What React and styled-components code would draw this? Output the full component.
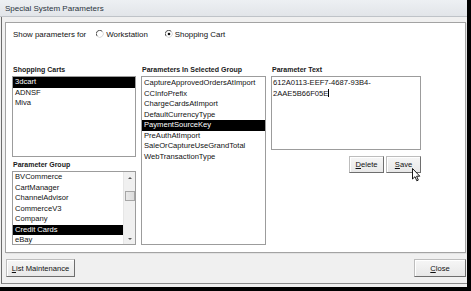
import React from 'react'
import styled, { createGlobalStyle } from 'styled-components'

const GlobalStyle = createGlobalStyle`
  html, body { margin: 0; padding: 0; background: #000; }
  body { font-family: "Liberation Sans", Arial, sans-serif; }
`

const shoppingCarts = ['3dcart', 'ADNSF', 'Miva']
const groups = ['BVCommerce', 'CartManager', 'ChannelAdvisor', 'CommerceV3', 'Company', 'Credit Cards', 'eBay']
const params = [
  'CaptureApprovedOrdersAtImport',
  'CCInfoPrefix',
  'ChargeCardsAtImport',
  'DefaultCurrencyType',
  'PaymentSourceKey',
  'PreAuthAtImport',
  'SaleOrCaptureUseGrandTotal',
  'WebTransactionType',
]

const Radio = ({ checked }) => (
  <svg width="8" height="8" viewBox="0 0 8 8">
    <path d="M1.2 6.2 A3.3 3.3 0 0 1 6.4 1.4" fill="none" stroke="#4a4a4a" strokeWidth="1" />
    <path d="M6.4 1.4 A3.3 3.3 0 0 1 1.2 6.2" fill="none" stroke="#d8d8d8" strokeWidth="1" />
    {checked && <circle cx="4" cy="4" r="1.3" fill="#111" />}
  </svg>
)

const Pointer = () => (
  <svg width="9" height="14" viewBox="0 0 9 14">
    <path d="M0.5 0.5 L0.5 11 L3 8.7 L4.8 12.8 L6.3 12.1 L4.6 8.2 L7.8 8.2 Z" fill="#fff" stroke="#000" strokeWidth="0.9" strokeLinejoin="round" />
  </svg>
)

const App = () => {
  return (
    <>
      <GlobalStyle />
      <Window>
        <TitleBar>Special System Parameters</TitleBar>
        <Body>
          <Panel>
            <ShowRow>
              <span>Show parameters for</span>
              <RadioOption $gap={10}>
                <Radio />
                <span>Workstation</span>
              </RadioOption>
              <RadioOption $gap={17}>
                <Radio checked />
                <span>Shopping Cart</span>
              </RadioOption>
            </ShowRow>
            <Columns>
              <Column $width={124}>
                <Label>Shopping Carts</Label>
                <ListBox $height={81}>
                  {shoppingCarts.map((c) => (
                    <Row key={c} $selected={c === '3dcart'}>{c}</Row>
                  ))}
                </ListBox>
                <Label $top={3}>Parameter Group</Label>
                <ListBox $height={74} $scroll>
                  <ListRows>
                    {groups.map((g) => (
                      <Row key={g} $selected={g === 'Credit Cards'}>{g}</Row>
                    ))}
                  </ListRows>
                  <ScrollBar>
                    <Arrow $up />
                    <Thumb />
                    <Spacer />
                    <Arrow />
                  </ScrollBar>
                </ListBox>
              </Column>
              <Column $width={125}>
                <Label>Parameters In Selected Group</Label>
                <ListBox $height={169} $padTop={1}>
                  {params.map((p) => (
                    <Row key={p} $selected={p === 'PaymentSourceKey'}>{p}</Row>
                  ))}
                </ListBox>
              </Column>
              <Column $width={150}>
                <Label>Parameter Text</Label>
                <TextBox>
                  612A0113-EEF7-4687-93B4-<br />2AAE5B66F05E<Caret />
                </TextBox>
                <ButtonRow>
                  <Button $width={35}><u>D</u>elete</Button>
                  <Button $width={35}>
                    <u>S</u>ave
                    <Cursor><Pointer /></Cursor>
                  </Button>
                </ButtonRow>
              </Column>
            </Columns>
          </Panel>
          <Footer>
            <Button $width={69} $height={18}><u>L</u>ist Maintenance</Button>
            <Button $width={52} $height={18}><u>C</u>lose</Button>
          </Footer>
        </Body>
      </Window>
    </>
  )
}

const Window = styled.div`
  width: 471px;
  height: 291px;
  box-sizing: border-box;
  background: #f0f0f0;
  border-right: 4px solid #000;
  border-bottom: 4px solid #000;
  display: flex;
  flex-direction: column;
  overflow: hidden;
  color: #111;
`

const TitleBar = styled.div`
  height: 16px;
  flex-shrink: 0;
  background: linear-gradient(#edf0f3, #e2e5e9);
  border-bottom: 1px solid #bfc3c8;
  font-size: 8px;
  line-height: 17px;
  padding-left: 5px;
  color: #2a3440;
`

const Body = styled.div`
  flex: 1;
  display: flex;
  flex-direction: column;
  padding: 5px 1px 0 3px;
  margin: 0 0 3px 1px;
  border-left: 1px solid #6c6c6c;
  border-bottom: 1px solid #8a8a8a;
`

const Panel = styled.div`
  height: 231px;
  box-sizing: border-box;
  background: #fff;
  border: 1px solid #a3a3a3;
  box-shadow: 1px 1px 0 #e2e2e2;
  padding: 6px 6px 0 6px;
`

const ShowRow = styled.div`
  display: flex;
  align-items: center;
  height: 10px;
  padding-left: 1px;
  font-size: 7.9px;
`

const RadioOption = styled.div`
  display: flex;
  align-items: center;
  gap: 2px;
  margin-left: ${(p) => p.$gap}px;
  svg { display: block; }
`

const Columns = styled.div`
  display: flex;
  gap: 5px;
  margin-top: 26px;
`

const Column = styled.div`
  width: ${(p) => p.$width}px;
  display: flex;
  flex-direction: column;
`

const Label = styled.div`
  font-size: 7px;
  font-weight: bold;
  line-height: 10px;
  height: 10px;
  margin-top: ${(p) => p.$top || 0}px;
  margin-bottom: 1px;
  padding-left: 1px;
  color: #1a1a1a;
`

const ListBox = styled.div`
  height: ${(p) => p.$height}px;
  box-sizing: border-box;
  border: 1px solid #9c9c9c;
  background: #fff;
  padding-top: ${(p) => p.$padTop || 0}px;
  display: ${(p) => (p.$scroll ? 'flex' : 'block')};
  overflow: hidden;
`

const ListRows = styled.div`
  flex: 1;
`

const Row = styled.div`
  height: 10.5px;
  line-height: 10.5px;
  font-size: 7.6px;
  padding-left: 2px;
  white-space: nowrap;
  background: ${(p) => (p.$selected ? '#000' : 'transparent')};
  color: ${(p) => (p.$selected ? '#fff' : '#111')};
`

const ScrollBar = styled.div`
  width: 11px;
  background: #f0f0f0;
  border-left: 1px solid #e6e6e6;
  display: flex;
  flex-direction: column;
  align-items: center;
  padding: 5px 0 4px;
`

const Arrow = styled.div`
  width: 0;
  height: 0;
  border-left: 2px solid transparent;
  border-right: 2px solid transparent;
  ${(p) => (p.$up ? 'border-bottom: 2px solid #555;' : 'border-top: 2px solid #555;')}
`

const Thumb = styled.div`
  width: 10px;
  height: 10px;
  margin-top: 12px;
  box-sizing: border-box;
  background: linear-gradient(90deg, #e9e9e9, #dcdcdc);
  border: 1px solid #a6a6a6;
`

const Spacer = styled.div`
  flex: 1;
`

const TextBox = styled.div`
  height: 74px;
  box-sizing: border-box;
  border: 1px solid #9c9c9c;
  padding: 1px;
  font-size: 7.6px;
  line-height: 10.5px;
  color: #111;
`

const Caret = styled.span`
  display: inline-block;
  width: 0;
  height: 8px;
  border-left: 1px solid #000;
  vertical-align: -1px;
`

const ButtonRow = styled.div`
  display: flex;
  justify-content: flex-end;
  gap: 2px;
  margin-top: 6px;
`

const Button = styled.div`
  position: relative;
  width: ${(p) => p.$width}px;
  height: ${(p) => p.$height || 17}px;
  box-sizing: border-box;
  display: flex;
  align-items: center;
  justify-content: center;
  font-size: 7.6px;
  color: #111;
  background: linear-gradient(#f6f6f6, #e8e8e8);
  border: 1px solid #bdbdbd;
  border-right-color: #6e6e6e;
  border-bottom-color: #6e6e6e;
  box-shadow: inset 1px 1px 0 #fff;
  u { text-underline-offset: 1px; }
`

const Cursor = styled.div`
  position: absolute;
  left: 25px;
  top: 11px;
  svg { display: block; }
`

const Footer = styled.div`
  display: flex;
  justify-content: space-between;
  align-items: flex-start;
  margin-top: 6px;
  padding-left: 1px;
`

export default App
